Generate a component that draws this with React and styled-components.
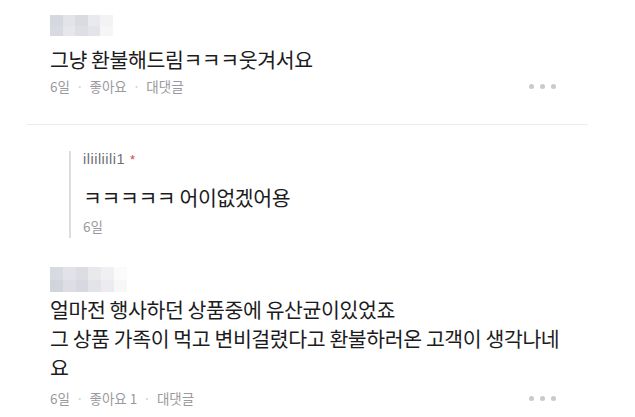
import React from "react";
import styled, { createGlobalStyle } from "styled-components";

const GlobalStyle = createGlobalStyle`
  html, body {
    margin: 0;
    padding: 0;
    background: #ffffff;
  }
  body {
    font-family: "Noto Sans CJK KR", "Noto Sans", sans-serif;
    color: #1d1d1f;
  }
`;

const comments = {
  first: {
    mosaic: { cols: 5, w: 63, h: 21, cells: ["#d6d8df", "#e3e4e9", "#dadbe1", "#e9eaee", "#f3f3f5", "#d9dae1", "#e6e7eb", "#dedfe4", "#e4e5ea", "#f6f6f7"] },
    lines: ["그냥 환불해드림ㅋㅋㅋ웃겨서요"],
    likes: "",
  },
  second: {
    mosaic: { cols: 6, w: 77, h: 25, cells: ["#d8dae1", "#e2e3e8", "#dcdde3", "#e8e9ed", "#f0f0f3", "#fbfbfc", "#d2d4dc", "#dcdee4", "#d7d9e0", "#e3e4e9", "#ececf0", "#f7f7f8"] },
    lines: ["얼마전 행사하던 상품중에 유산균이있었죠", "그 상품 가족이 먹고 변비걸렸다고 환불하러온 고객이 생각나네요"],
    likes: " 1",
  },
};

const Page = styled.div`
  width: 635px;
  height: 417px;
  overflow: hidden;
  padding-top: 15px;
  box-sizing: border-box;
`;

const Comment = styled.div`
  padding-left: 50px;
  width: 506px;
`;

const Mosaic = styled.div`
  display: grid;
  grid-template-columns: repeat(${(p) => p.$cols}, 1fr);
  width: ${(p) => p.$w}px;
  height: ${(p) => p.$h}px;
`;

const Cell = styled.div`
  background: ${(p) => p.$c};
`;

const Body = styled.div`
  margin: ${(p) => (p.$multi ? "3px" : "9px")} 0 0;
  width: 515px;
  font-size: 20.5px;
  line-height: ${(p) => (p.$multi ? "29px" : "28px")};
  color: #1c1c1e;
  letter-spacing: -0.4px;
`;

const MetaRow = styled.div`
  display: flex;
  align-items: center;
  justify-content: space-between;
  margin-top: ${(p) => p.$top}px;
  height: 18px;
`;

const Meta = styled.span`
  font-size: 13.5px;
  line-height: 18px;
  color: #9a9a9e;
`;

const Sep = styled.span`
  color: #d2d2d6;
  margin: 0 6px;
`;

const More = styled.div`
  display: flex;
  gap: 6px;
`;

const Dot = styled.span`
  width: 5px;
  height: 5px;
  border-radius: 50%;
  background: #c9c9ce;
`;

const Divider = styled.hr`
  border: 0;
  height: 1px;
  background: #ececee;
  margin: 29px 0 0 27px;
  width: 561px;
`;

const Reply = styled.div`
  margin: 26px 0 0 69px;
  padding: 0 0 3px 12px;
  border-left: 2px solid #dcdcdf;
`;

const Author = styled.div`
  font-family: "Liberation Sans", sans-serif;
  font-size: 14.5px;
  line-height: 16px;
  color: #6e6e74;
  letter-spacing: 0.5px;
`;

const Star = styled.span`
  color: #d0473f;
  margin-left: 5px;
  font-size: 13px;
`;

const ReplyText = styled.p`
  margin: 15px 0 0;
  font-size: 20.5px;
  line-height: 28px;
  color: #1c1c1e;
  letter-spacing: -0.4px;
`;

const Spacer = styled.div`
  height: 29px;
`;

function Dots() {
  return (
    <More>
      <Dot />
      <Dot />
      <Dot />
    </More>
  );
}

function Blur({ mosaic }) {
  return (
    <Mosaic $cols={mosaic.cols} $w={mosaic.w} $h={mosaic.h}>
      {mosaic.cells.map((c, i) => (
        <Cell key={i} $c={c} />
      ))}
    </Mosaic>
  );
}

function CommentItem({ data, multi, metaTop }) {
  return (
    <Comment>
      <Blur mosaic={data.mosaic} />
      <Body $multi={multi}>
        {data.lines.map((l, i) => (
          <div key={i}>{l}</div>
        ))}
      </Body>
      <MetaRow $top={metaTop}>
        <Meta>
          6일<Sep>·</Sep>좋아요{data.likes}
          <Sep>·</Sep>대댓글
        </Meta>
        <Dots />
      </MetaRow>
    </Comment>
  );
}

export default function App() {
  return (
    <Page>
      <GlobalStyle />
      <CommentItem data={comments.first} metaTop={4} />
      <Divider />
      <Reply>
        <Author>
          iliiliili1<Star>*</Star>
        </Author>
        <ReplyText>ㅋㅋㅋㅋㅋ 어이없겠어용</ReplyText>
        <MetaRow $top={6}>
          <Meta>6일</Meta>
        </MetaRow>
      </Reply>
      <Spacer />
      <CommentItem data={comments.second} multi metaTop={7} />
    </Page>
  );
}
